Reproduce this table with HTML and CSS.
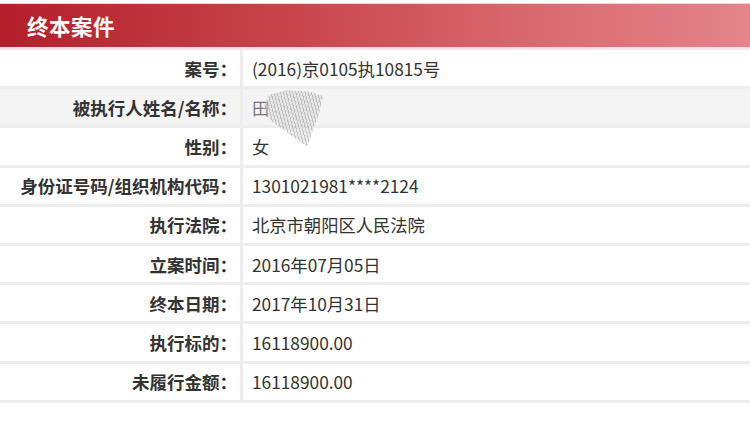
FILE: index.html
```html
<!DOCTYPE html>
<html lang="zh-CN">
<head>
<meta charset="utf-8">
<link rel="stylesheet" href="styles.css">
</head>
<body>
<div class="panel">
  <div class="header"><span class="title">终本案件</span></div>
  <div class="table">
    <div class="row"><div class="label">案号：</div><div class="value">(2016)京0105执10815号</div></div>
    <div class="row alt"><div class="label">被执行人姓名/名称：</div><div class="value"><span class="masked">田</span><span class="scribble"></span></div></div>
    <div class="row"><div class="label">性别：</div><div class="value">女</div></div>
    <div class="row"><div class="label">身份证号码/组织机构代码：</div><div class="value">1301021981****2124</div></div>
    <div class="row"><div class="label">执行法院：</div><div class="value">北京市朝阳区人民法院</div></div>
    <div class="row"><div class="label">立案时间：</div><div class="value">2016年07月05日</div></div>
    <div class="row"><div class="label">终本日期：</div><div class="value">2017年10月31日</div></div>
    <div class="row"><div class="label">执行标的：</div><div class="value">16118900.00</div></div>
    <div class="row"><div class="label">未履行金额：</div><div class="value">16118900.00</div></div>
  </div>
</div>
</body>
</html>
```

FILE: styles.css
```css
html, body {
  margin: 0;
  padding: 0;
  background: #ffffff;
}
body {
  font-family: "Noto Sans CJK SC", "Noto Sans", sans-serif;
  color: #333333;
}
.panel {
  padding-top: 3px;
  width: 750px;
}
.header {
  height: 47px;
  box-sizing: border-box;
  border-top: 1px solid #f6d3d6;
  border-bottom: 3px solid #f3e5e7;
  background: linear-gradient(to right, #b31f2a 0%, #c9464d 40%, #d9686e 70%, #e4848b 100%);
  display: flex;
  align-items: center;
  padding-left: 27px;
}
.title {
  color: #ffffff;
  font-size: 21.5px;
  font-weight: 700;
  letter-spacing: 0.5px;
  line-height: 1;
}
.table {
  display: flex;
  flex-direction: column;
}
.row {
  display: flex;
  height: 39.2px;
  box-sizing: border-box;
  border-bottom: 3px solid #ededed;
  background: #ffffff;
}
.row.alt {
  background: #f4f4f4;
}
.label {
  width: 243px;
  box-sizing: border-box;
  padding-right: 3px;
  text-align: right;
  font-size: 17.5px;
  font-weight: 700;
  display: flex;
  align-items: center;
  justify-content: flex-end;
  border-right: 3px solid #ededed;
}
.value {
  flex: 1;
  padding-left: 9px;
  font-size: 17.3px;
  display: flex;
  align-items: center;
  position: relative;
}
.masked {
  color: #777777;
}
.scribble {
  position: absolute;
  left: 20px;
  top: 1px;
  width: 60px;
  height: 56px;
  background:
    repeating-linear-gradient(75deg, rgba(140,140,140,0.55) 0 1px, rgba(215,215,215,0.5) 1px 3px),
    repeating-linear-gradient(20deg, rgba(170,170,170,0.35) 0 1px, rgba(230,230,230,0.2) 1px 4px);
  clip-path: polygon(10% 8%, 40% 0%, 78% 3%, 100% 10%, 94% 40%, 82% 75%, 74% 100%, 58% 90%, 36% 72%, 14% 55%, 0% 32%);
  filter: blur(0.5px);
  opacity: 0.85;
}
```
